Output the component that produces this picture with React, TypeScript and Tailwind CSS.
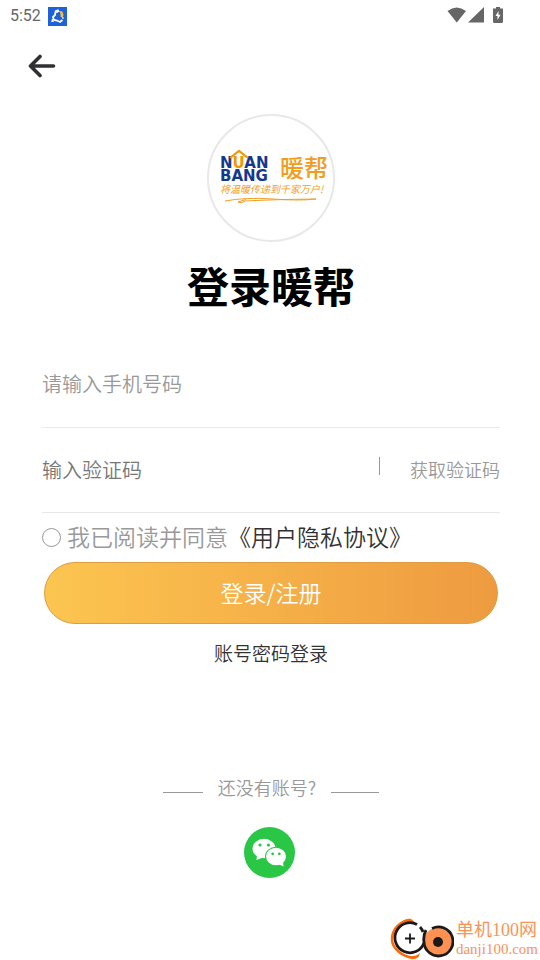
import { useState } from "react";

const sans = "font-['Noto_Sans_CJK_SC',sans-serif]";

function StatusBar() {
  return (
    <div className="flex h-8 items-center justify-between pl-[10px] pr-9 text-[#666]">
      <div className="flex items-center gap-[7px]">
        <span className="font-['Roboto','Noto_Sans_CJK_SC',sans-serif] text-[16px] leading-5 font-normal">5:52</span>
        <svg width="19" height="19" viewBox="0 0 19 19" aria-hidden="true">
          <rect width="19" height="19" fill="#1d62d8" />
          <path d="M10 4.500L7.500 5L7 8L5 10L6 13L9 13.500L12 15L14.500 13" fill="none" stroke="#fff" strokeWidth="1.800" />
          <path d="M11 4L14.500 4.500L15.500 8L14.500 11L12.500 9.500L12.500 6.500Z" fill="#fdbb45" />
          <path d="M7 4L10 3L11 5M4.500 12L4 14.500L6 14M14 11L16 11" fill="none" stroke="#fff" strokeWidth="1.200" />
        </svg>
      </div>
      <svg width="57" height="18" viewBox="0 0 57 18" fill="#666" aria-hidden="true">
        <path d="M0.500 4Q9.500 -3 19 4L9.800 15.500Z" />
        <path d="M37 0V15.500H21Z" />
        <path d="M46 1.500H49V0H53V1.500H56V14.500Q56 16 54.500 16H47.500Q46 16 46 14.500Z" />
        <path d="M51.500 4L48.500 9H50.500V13L53.500 7.800H51.500Z" fill="#fff" />
      </svg>
    </div>
  );
}

function BrandLogo() {
  return (
    <div className="flex size-32 items-center justify-center rounded-full border-2 border-[#e8e8e8]">
      <svg width="120" height="64" viewBox="0 0 120 64" role="img" aria-label="暖帮">
        <g fill="#15388f" fontFamily="'DejaVu Sans', sans-serif" fontWeight="700" fontSize="15">
          <text x="9" y="22">
            N<tspan fill="#f39800">U</tspan>AN
          </text>
          <text x="9" y="35">BANG</text>
        </g>
        <path d="M19 12L28 5L37 12" fill="none" stroke="#f39800" strokeWidth="2.200" />
        <text x="69" y="31" fill="#f39d1c" fontFamily="'Noto Sans CJK SC', sans-serif" fontWeight="500" fontSize="24">暖帮</text>
        <text x="9" y="47" fill="#f0a028" fontFamily="'Noto Sans CJK SC', sans-serif" fontWeight="400" fontSize="10" fontStyle="italic">将温暖传递到千家万户!</text>
        <path d="M14 55Q35 51 62 53T105 53Q62 53.500 34 55Q31 58 27 56L35 53.500" fill="none" stroke="#f0a028" strokeWidth="1" />
      </svg>
    </div>
  );
}

function WechatIcon() {
  return (
    <svg width="51" height="51" viewBox="0 0 51 51" aria-hidden="true">
      <circle cx="25.500" cy="25.500" r="25.500" fill="#2ac645" />
      <ellipse cx="20" cy="21.500" rx="11.500" ry="9.700" fill="#fff" />
      <path d="M13 28L12.500 33L19 30.500Z" fill="#fff" />
      <circle cx="16" cy="18" r="1.600" fill="#2ac645" />
      <circle cx="24.500" cy="18" r="1.600" fill="#2ac645" />
      <ellipse cx="32" cy="29.500" rx="11" ry="9.700" fill="#2ac645" />
      <ellipse cx="32" cy="29.500" rx="10" ry="8.700" fill="#fff" />
      <path d="M34 37L39.500 39.500L39 34Z" fill="#fff" />
      <circle cx="28.700" cy="26.800" r="1.400" fill="#2ac645" />
      <circle cx="35.300" cy="26.800" r="1.400" fill="#2ac645" />
    </svg>
  );
}

function Watermark() {
  return (
    <div className="absolute right-[2px] bottom-0 flex items-center gap-[2px] text-[#fa9358]">
      <svg width="64" height="42" viewBox="0 0 64 42" fill="none" aria-hidden="true">
        <path d="M21 2C11 2 2 11 2 21S12 38 23 40" stroke="#fa6b08" strokeWidth="2.500" />
        <path d="M11 5Q17 -1 22 1.500L25 5Q16 3 11 5Z" fill="#fa6b08" />
        <path d="M17 38Q26 39 30 35Q29 41 23 41Z" fill="#fa6b08" />
        <path d="M27 6.500A15 15 0 1 0 34 25" stroke="#1d191a" strokeWidth="2.800" />
        <path d="M30 9Q32 11 33 14" stroke="#1d191a" strokeWidth="2.800" />
        <path d="M15 20.500H25M20 15.500V25.500" stroke="#1d191a" strokeWidth="1.800" />
        <circle cx="48" cy="24" r="14.500" fill="#fc9151" />
        <path d="M42 10.500A14.500 14.500 0 1 1 34 24Q33 18 36 12" stroke="#1d191a" strokeWidth="2.800" />
        <circle cx="48" cy="24" r="5" fill="#1d191a" />
      </svg>
      <div className="flex flex-col font-['Liberation_Serif','Noto_Sans_CJK_SC',serif] font-normal">
        <span className="text-[18px] leading-5">单机100网</span>
        <span className="text-[15px] leading-[18px]">danji100.com</span>
      </div>
    </div>
  );
}

export default function App() {
  const [agreed, setAgreed] = useState(false);

  return (
    <main className={`relative min-h-screen bg-white font-[350] text-[#333] ${sans}`}>
      <StatusBar />
      <header className="flex h-[68px] items-center px-7">
        <button type="button" aria-label="返回">
          <svg width="28" height="24" viewBox="0 0 28 24" fill="none" stroke="#303033" strokeWidth="3.600" strokeLinecap="round" strokeLinejoin="round" aria-hidden="true">
            <path d="M12 2.500L2.500 12L12 21.500M3 12H25.500" />
          </svg>
        </button>
      </header>

      <form className="flex flex-col pt-[14px] pr-10 pl-[42px]" onSubmit={(e) => e.preventDefault()}>
        <div className="flex flex-col items-center">
          <BrandLogo />
          <h1 className="mt-[13px] text-[42px] leading-[60px] font-bold text-black">登录暖帮</h1>
        </div>

        <div className="mt-7 flex h-[85px] items-center border-b border-[#e8e8e8] pb-[2px]">
          <input type="tel" aria-label="手机号码" placeholder="请输入手机号码" className="w-full bg-transparent text-[20px] leading-8 outline-none placeholder:text-[#999]" />
        </div>
        <div className="flex h-[85px] items-center border-b border-[#e8e8e8]">
          <input type="text" aria-label="验证码" placeholder="输入验证码" className="min-w-0 flex-1 bg-transparent text-[20px] leading-8 outline-none placeholder:text-[#777]" />
          <span className="mr-[30px] mb-2 h-[18px] w-px bg-[#999]" />
          <button type="button" className="pb-[2px] text-[18px] leading-8 text-[#999]">获取验证码</button>
        </div>

        <div className="mt-2 flex h-8 items-center gap-[6px] text-[23px] leading-8 whitespace-nowrap">
          <input
            id="agree"
            type="checkbox"
            checked={agreed}
            onChange={(e) => setAgreed(e.target.checked)}
            className="size-[19px] shrink-0 appearance-none rounded-full border border-[#999] checked:bg-[#f6b04a]"
          />
          <div className="pb-[2px]">
            <label htmlFor="agree" className="text-[#999]">我已阅读并同意</label>
            <a href="#privacy">《用户隐私协议》</a>
          </div>
        </div>

        <button type="submit" className="mx-[2px] mt-[9px] h-[62px] rounded-full border border-[#dc9d43] bg-linear-to-r from-[#fcc550] to-[#ee9b40] pb-[2px] text-[23px] leading-8 text-white">
          登录/注册
        </button>
        <a href="#password" className="mt-[15px] self-center text-[19px] leading-7">账号密码登录</a>

        <div className="mt-[106px] flex items-center justify-center gap-[15px] text-[18px] leading-7 text-[#999]">
          <span className="mt-[10px] h-px w-10 bg-[#999]" />
          <span>还没有账号?</span>
          <span className="mt-[10px] h-px w-12 bg-[#999]" />
        </div>
        <button type="button" aria-label="微信登录" className="mt-[26px] mr-1 self-center rounded-full">
          <WechatIcon />
        </button>
      </form>
      <Watermark />
    </main>
  );
}
